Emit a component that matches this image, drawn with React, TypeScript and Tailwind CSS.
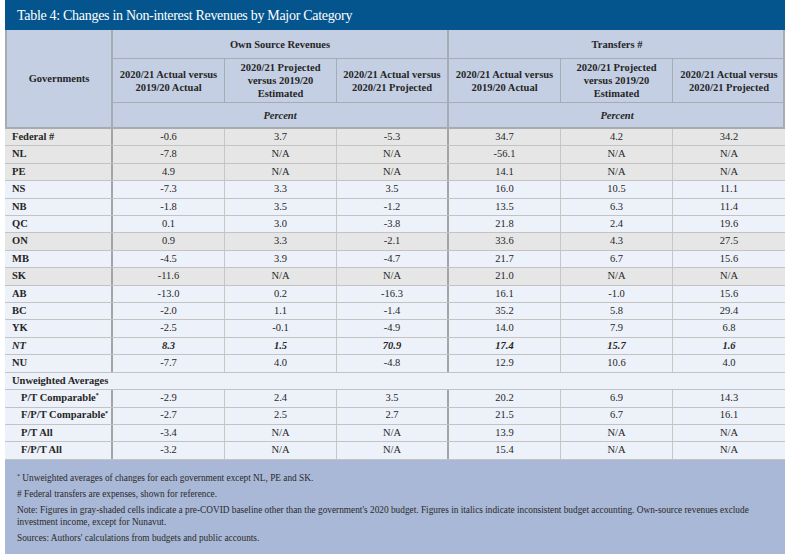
import React from 'react';

type Row = {
  label: string;
  values: string[];
  gray?: boolean;
  italic?: boolean;
  indent?: boolean;
};

const rows: Row[] = [
  { label: 'Federal #', values: ['-0.6', '3.7', '-5.3', '34.7', '4.2', '34.2'], gray: true },
  { label: 'NL', values: ['-7.8', 'N/A', 'N/A', '-56.1', 'N/A', 'N/A'], gray: true },
  { label: 'PE', values: ['4.9', 'N/A', 'N/A', '14.1', 'N/A', 'N/A'], gray: true },
  { label: 'NS', values: ['-7.3', '3.3', '3.5', '16.0', '10.5', '11.1'] },
  { label: 'NB', values: ['-1.8', '3.5', '-1.2', '13.5', '6.3', '11.4'] },
  { label: 'QC', values: ['0.1', '3.0', '-3.8', '21.8', '2.4', '19.6'] },
  { label: 'ON', values: ['0.9', '3.3', '-2.1', '33.6', '4.3', '27.5'], gray: true },
  { label: 'MB', values: ['-4.5', '3.9', '-4.7', '21.7', '6.7', '15.6'] },
  { label: 'SK', values: ['-11.6', 'N/A', 'N/A', '21.0', 'N/A', 'N/A'], gray: true },
  { label: 'AB', values: ['-13.0', '0.2', '-16.3', '16.1', '-1.0', '15.6'] },
  { label: 'BC', values: ['-2.0', '1.1', '-1.4', '35.2', '5.8', '29.4'] },
  { label: 'YK', values: ['-2.5', '-0.1', '-4.9', '14.0', '7.9', '6.8'] },
  { label: 'NT', values: ['8.3', '1.5', '70.9', '17.4', '15.7', '1.6'], italic: true },
  { label: 'NU', values: ['-7.7', '4.0', '-4.8', '12.9', '10.6', '4.0'] },
];

const averages: Row[] = [
  { label: 'P/T Comparable*', values: ['-2.9', '2.4', '3.5', '20.2', '6.9', '14.3'], indent: true },
  { label: 'F/P/T Comparable*', values: ['-2.7', '2.5', '2.7', '21.5', '6.7', '16.1'], indent: true },
  { label: 'P/T All', values: ['-3.4', 'N/A', 'N/A', '13.9', 'N/A', 'N/A'], indent: true },
  { label: 'F/P/T All', values: ['-3.2', 'N/A', 'N/A', '15.4', 'N/A', 'N/A'], indent: true },
];

const subHeaders = [
  '2020/21 Actual versus 2019/20 Actual',
  '2020/21 Projected versus 2019/20 Estimated',
  '2020/21 Actual versus 2020/21 Projected',
];

const DataRow: React.FC<{ row: Row }> = ({ row }) => {
  const label = row.label.endsWith('*') ? (
    <>
      {row.label.slice(0, -1)}
      <sup className="text-[6px]">*</sup>
    </>
  ) : (
    row.label
  );
  return (
    <div
      className={`grid h-[17.42px] grid-cols-[108px_repeat(6,112px)] border-b border-[#c3c3c3] text-[10.5px] leading-none text-[#262626] ${
        row.gray ? 'bg-[#e6e6e6]' : 'bg-[#edf1f9]'
      } ${row.italic ? 'italic' : ''}`}
    >
      <div
        className={`flex items-center border-r-2 border-[#a4a4a4] font-bold ${row.indent ? 'pl-[16px]' : 'pl-[7px]'}`}
      >
        {label}
      </div>
      {row.values.map((v, i) => (
        <div
          key={i}
          className={`flex items-center justify-center ${row.italic ? 'font-bold' : ''} ${
            i === 2 ? 'border-r-2 border-[#a4a4a4]' : i < 5 ? 'border-r border-[#c6c6c6]' : ''
          }`}
        >
          {v}
        </div>
      ))}
    </div>
  );
};

export default function App() {
  return (
    <div className="h-[554px] w-[800px] bg-white pl-[5px] font-['Liberation_Serif',serif]">
      <div className="w-[780px]">
        <div className="flex h-[30px] items-center bg-[#04558e] pl-[12px] text-[14px] tracking-[-0.3px] text-white">
          Table 4: Changes in Non-interest Revenues by Major Category
        </div>

        <div className="border-x-2 border-[#a7abb2]">
          <div className="grid grid-cols-[106px_repeat(6,112px)] grid-rows-[29px_44px_24px] border-b-2 border-[#a7abb2] bg-[#c4cfe3] text-[10.5px] font-bold leading-[13px] text-[#262626]">
            <div className="row-span-3 flex items-center justify-center border-r-2 border-[#a7abb2]">
              Governments
            </div>
            <div className="col-span-3 flex items-center justify-center border-b border-r-2 border-[#a7abb2]">
              Own Source Revenues
            </div>
            <div className="col-span-3 flex items-center justify-center border-b border-[#a7abb2]">
              Transfers #
            </div>
            {[0, 1].map((g) =>
              subHeaders.map((h, i) => (
                <div
                  key={`${g}-${i}`}
                  className={`flex items-center justify-center border-b border-[#a7abb2] px-[6px] text-center ${
                    i === 2 && g === 0 ? 'border-r-2' : i < 2 || g === 0 ? 'border-r' : ''
                  }`}
                >
                  {h}
                </div>
              ))
            )}
            <div className="col-span-3 flex items-center justify-center border-r-2 border-[#a7abb2] italic">
              Percent
            </div>
            <div className="col-span-3 flex items-center justify-center italic">Percent</div>
          </div>

          <div className="-mx-[2px]">
            {rows.map((r) => (
              <DataRow key={r.label} row={r} />
            ))}
            <div className="flex h-[17.42px] items-center border-b border-[#c3c3c3] bg-[#edf1f9] pl-[7px] text-[10.5px] font-bold text-[#262626]">
              Unweighted Averages
            </div>
            {averages.map((r) => (
              <DataRow key={r.label} row={r} />
            ))}
          </div>
        </div>

        <div className="flex h-[96px] flex-col gap-[4px] bg-[#a9b8d6] px-[12px] pt-[12px] text-[9.3px] leading-[12px] text-[#2a2a2a]">
          <p>
            <sup className="text-[6px]">*</sup> Unweighted averages of changes for each government except NL, PE and SK.
          </p>
          <p># Federal transfers are expenses, shown for reference.</p>
          <p>
            Note: Figures in gray-shaded cells indicate a pre-COVID baseline other than the government's 2020 budget.
            Figures in italics indicate inconsistent budget accounting. Own-source revenues exclude investment income,
            except for Nunavut.
          </p>
          <p>Sources: Authors' calculations from budgets and public accounts.</p>
        </div>
      </div>
    </div>
  );
}
